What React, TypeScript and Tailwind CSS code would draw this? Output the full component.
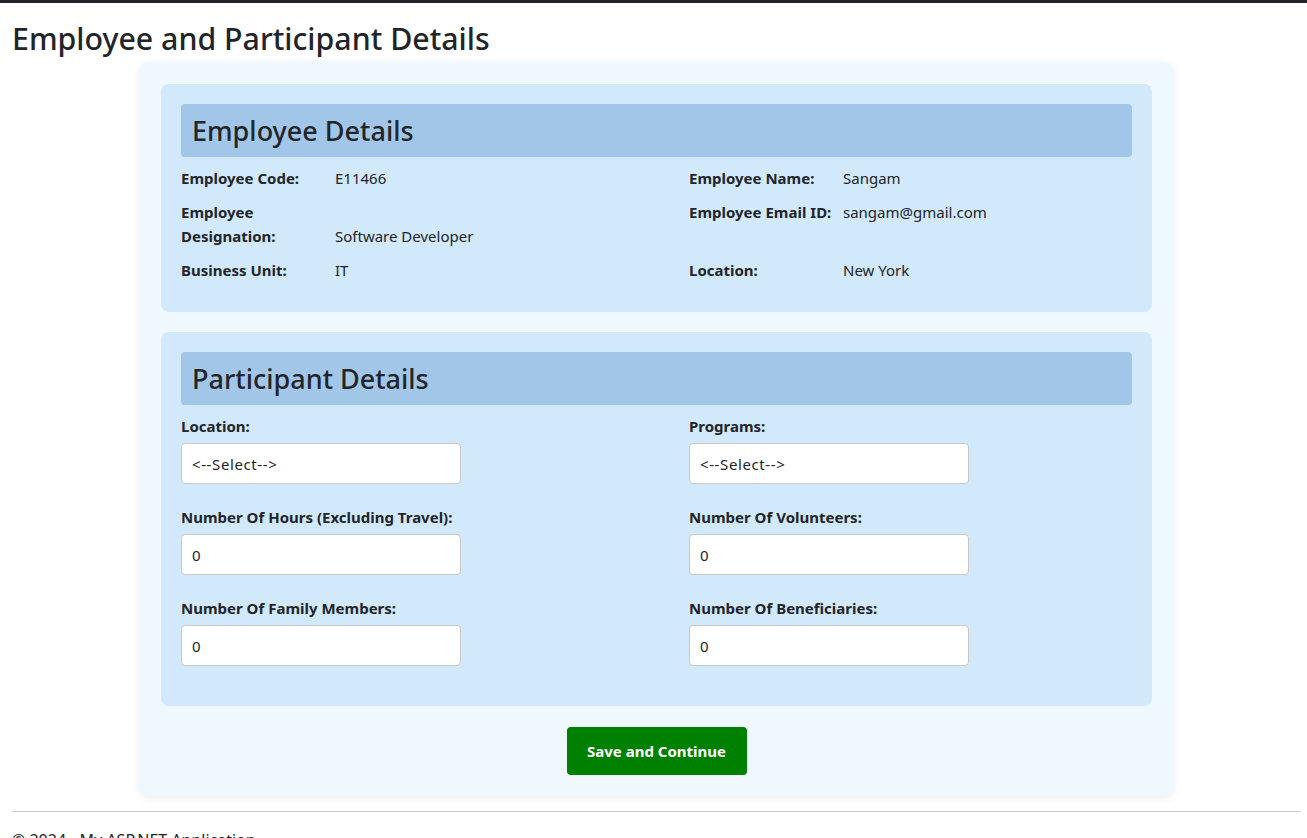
const font = { fontFamily: '"Noto Sans", "Open Sans", sans-serif' };

function Info({ label, value }: { label: string; value: string }) {
  return (
    <div className="flex items-end">
      <span className="w-[154px] shrink-0 font-bold pr-2">{label}</span>
      <span>{value}</span>
    </div>
  );
}

function Field({ label, value, select }: { label: string; value: string; select?: boolean }) {
  return (
    <div className="mb-[21px]">
      <div className="font-bold leading-6 mb-[5px]">{label}</div>
      <div
        className={
          "w-[280px] h-[41px] bg-white border border-[#c8c8c8] rounded-[4px] flex items-center px-[10px] " +
          (select ? "text-[15px] tracking-[0.6px]" : "text-[15px]")
        }
      >
        {value}
      </div>
    </div>
  );
}

function SectionHeader({ title }: { title: string }) {
  return (
    <div className="h-[53px] bg-[#a2c6e7] rounded-[4px] flex items-center px-[11px] mb-[9px]">
      <h3 className="text-[27px] font-medium leading-none">{title}</h3>
    </div>
  );
}

export default function App() {
  return (
    <div className="min-h-screen bg-white text-[#212529] text-[15px] leading-6" style={font}>
      <div className="h-[3px] bg-[#212529]"></div>
      <main className="px-3">
        <h1 className="text-[30.3px] font-medium leading-[40px] mt-[16px] mb-[3px]">
          Employee and Participant Details
        </h1>

        <div className="ml-[128px] w-[1033px] bg-[#eff7ff] rounded-[8px] shadow-[0_2px_10px_rgba(0,0,0,0.08)] px-[21px] pt-[22px] pb-[21px]">
          <section className="bg-[#d2e8fb] rounded-[8px] px-5 pt-5 pb-[30px]">
            <SectionHeader title="Employee Details" />
            <div className="grid grid-cols-[508px_1fr] gap-y-[10px]">
              <Info label="Employee Code:" value="E11466" />
              <Info label="Employee Name:" value="Sangam" />
              <Info label="Employee Designation:" value="Software Developer" />
              <div className="flex items-start">
                <span className="w-[154px] shrink-0 font-bold">Employee Email ID:</span>
                <span>sangam@gmail.com</span>
              </div>
              <Info label="Business Unit:" value="IT" />
              <Info label="Location:" value="New York" />
            </div>
          </section>

          <section className="bg-[#d2e8fb] rounded-[8px] px-5 pt-5 pb-[19px] mt-5">
            <SectionHeader title="Participant Details" />
            <div className="grid grid-cols-[508px_1fr]">
              <Field label="Location:" value="<--Select-->" select />
              <Field label="Programs:" value="<--Select-->" select />
              <Field label="Number Of Hours (Excluding Travel):" value="0" />
              <Field label="Number Of Volunteers:" value="0" />
              <Field label="Number Of Family Members:" value="0" />
              <Field label="Number Of Beneficiaries:" value="0" />
            </div>
          </section>

          <div className="flex justify-center mt-[21px]">
            <button className="w-[180px] h-[48px] bg-[#008000] text-white font-bold rounded-[4px] text-[15px]">
              Save and Continue
            </button>
          </div>
        </div>

        <hr className="mt-[15px] mr-[-6px] border-t border-[#cccccc]" />
        <footer className="pt-[16px] pb-4 text-[16px]">© 2024 - My ASP.NET Application</footer>
      </main>
    </div>
  );
}
